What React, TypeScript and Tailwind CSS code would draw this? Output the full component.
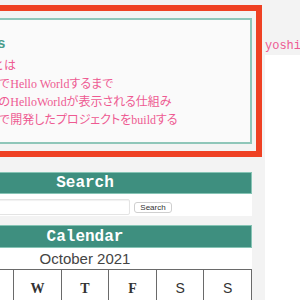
import React from "react";

const posts: [string, string][] = [
  ["Nuxt", "とは"],
  ["Vue.js", "でHello Worldするまで"],
  ["Vue.js", "のHelloWorldが表示される仕組み"],
  ["Vue.js", "で開発したプロジェクトをbuildする"],
];

const days = ["M", "T", "W", "T", "F", "S", "S"];

export default function App() {
  return (
    <div className="w-[300px] h-[300px] overflow-hidden bg-[#f3f3f3]">
      <div className="flex ml-[-82px] w-[700px]">
        <aside className="w-[334px] shrink-0 pt-[5px]">
          <div className="-ml-[10px] -mr-[10px] border-[6px] border-[#ef4123] pl-[4px] pr-[4px] pt-[7px] pb-[7px]">
            <div className="border-2 border-[#8fc6b9] bg-[#fafafa] pt-[13px] pb-[13px] pl-[12px]">
              <h3 className="-ml-[10px] h-[20px] leading-[20px] text-[14px] font-bold text-[#4a9c8b] [font-family:'Liberation_Sans',sans-serif]">
                Latest Posts
              </h3>
              <ul className="mt-[4px] pl-[36px] text-[12px] leading-[18px] text-[#ee5a92] [font-family:'Liberation_Serif','Noto_Sans_CJK_JP',serif] [font-feature-settings:'palt']">
                {posts.map(([a, b], i) => (
                  <li key={i} className="h-[18px] whitespace-nowrap">
                    {a}
                    <span className="[font-feature-settings:normal]">{b.slice(0, 1)}</span>
                    {b.slice(1)}
                  </li>
                ))}
              </ul>
            </div>
          </div>

          <section className="mt-[15px]">
            <div className="h-[22px] bg-[#3e8f7f] border border-[#86c4b5] flex items-center justify-center text-white text-[16px] font-bold [font-family:'Liberation_Mono',monospace]">
              Search
            </div>
            <div className="h-[22px] bg-white flex items-start pt-[5px] pl-[8px]">
              <div className="w-[204px] h-[16px] bg-white border border-[#e4e4e4] rounded-[2px] shadow-[inset_0_1px_1px_rgba(0,0,0,0.06)]" />
              <button className="ml-[4px] mt-[3px] w-[38px] h-[11px] rounded-[3px] border border-[#cfcfcf] bg-white flex items-center justify-center text-[8px] leading-none text-[#333] [font-family:'Liberation_Sans',sans-serif]">
                Search
              </button>
            </div>
          </section>

          <section className="mt-[9px]">
            <div className="h-[23px] bg-[#3e8f7f] border border-[#86c4b5] flex items-center justify-center text-white text-[16px] font-bold [font-family:'Liberation_Mono',monospace]">
              Calendar
            </div>
            <div className="bg-white">
              <div className="h-[21px] leading-[21px] text-center text-[15px] text-[#444] [font-family:'Liberation_Sans',sans-serif]">
                October 2021
              </div>
              <table className="w-full table-fixed border-collapse">
                <thead>
                  <tr className="h-[38px]">
                    {days.map((d, i) => (
                      <th
                        key={i}
                        className={
                          i >= 5
                            ? "border border-[#6a6a6a] text-[14px] font-medium text-[#333] [font-family:'Liberation_Sans',sans-serif]"
                            : "border border-[#6a6a6a] text-[14px] font-bold text-[#333] [font-family:'Liberation_Serif',serif]"
                        }
                      >
                        {d}
                      </th>
                    ))}
                  </tr>
                </thead>
              </table>
            </div>
          </section>
        </aside>

        <div className="ml-[13px] w-[200px] shrink-0">
          <div className="mt-[38px] h-[17px] leading-[17px] text-[12px] text-[#ee5a92] whitespace-nowrap [font-family:'Liberation_Mono',monospace]">
            yoshitaka
          </div>
          <div className="h-[245px] bg-white" />
        </div>
      </div>
    </div>
  );
}
